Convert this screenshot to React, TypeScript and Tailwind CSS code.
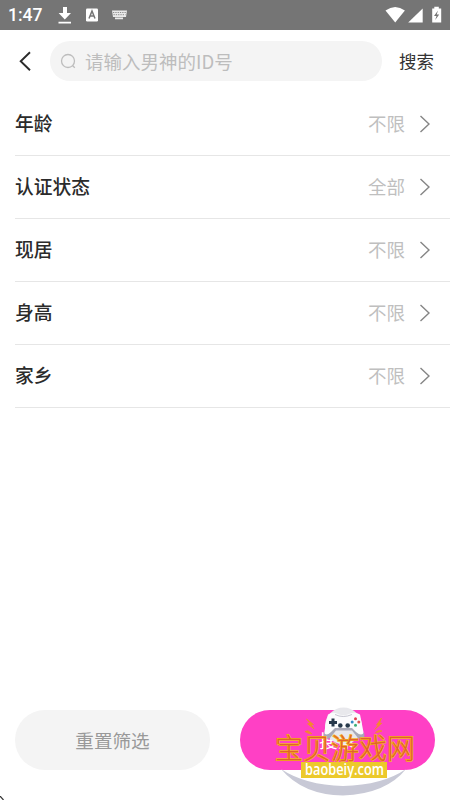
const filters = [
  { label: '年龄', value: '不限' },
  { label: '认证状态', value: '全部' },
  { label: '现居', value: '不限' },
  { label: '身高', value: '不限' },
  { label: '家乡', value: '不限' },
];

function StatusBar() {
  return (
    <div className="flex h-[30px] items-center bg-[#757575] pt-px pl-2 text-white">
      <span className="w-[49px] pt-px font-[Roboto] text-[17.500px] leading-none font-medium">1:47</span>
      <svg className="-mt-px h-[30px] w-[90px]" viewBox="57 0 90 30" fill="currentColor">
        <path d="M63 7h4v6h4l-6.200 6.500L58.600 13H63zM58.500 21.700h12.500v1.800H58.500z" />
        <rect x="86" y="8.500" width="12" height="13" rx="1.200" />
        <path d="M89 18.500l3-7.500 3 7.500M90 16h4" fill="none" stroke="#757575" strokeWidth="1.500" />
        <path d="M112 10.500h15l-1 6.500h-13zM115 17.500h8v1.800h-8z" opacity=".85" />
        <path d="M113 12.500h13M113.500 14.700h12" stroke="#757575" strokeWidth=".8" strokeDasharray="1.300 1" />
      </svg>
      <svg className="-mt-px ml-auto h-[30px] w-[70px]" viewBox="380 0 70 30" fill="currentColor">
        <path d="M385.500 10.500q9.700-7 19.400 0L395.200 22.500z" />
        <path d="M422.700 8.500v14h-14.500z" />
        <path d="M434.300 6.700h4.500v1.800h2.400v14h-9v-14h2.100z" />
        <path d="M438 10.500l-4 5.500h2.500l-1.300 4 4-5.400h-2.500z" fill="#757575" />
      </svg>
    </div>
  );
}

function Header() {
  return (
    <header className="flex h-[62px] items-center">
      <svg className="h-[22px] w-[50px]" viewBox="0 50 50 22" fill="none" stroke="#2b2b2b" strokeWidth="1.900">
        <path d="M30 52.300L20.700 61.300l9.300 9" />
      </svg>
      <div className="flex h-10 w-[332px] items-center rounded-full bg-[#f4f4f4] text-[#bdbdbd]">
        <svg className="ml-[10px] h-4 w-4" viewBox="0 0 16 16" fill="none" stroke="currentColor" strokeWidth="1.300">
          <circle cx="8" cy="8" r="6.500" />
          <path d="M12.500 12.500l2.300 2.300" />
        </svg>
        <span className="ml-[9px] text-[18.500px] leading-none">请输入男神的ID号</span>
      </div>
      <span className="ml-[17px] text-[17.500px] leading-none text-[#333]">搜索</span>
    </header>
  );
}

function FilterRow({ label, value }: { label: string; value: string }) {
  return (
    <div className="ml-[15px] flex h-[63px] items-center border-b border-[#e6e6e6] pr-[19px]">
      <span className="pb-[2px] text-[18.750px] leading-none font-medium text-[#2b2b2b]">{label}</span>
      <span className="ml-auto pb-[2px] text-[18.500px] leading-none text-[#bfbfbf]">{value}</span>
      <svg className="mr-px mb-px ml-[14px] h-[18px] w-[11px]" viewBox="0 0 11 18" fill="none" stroke="#858585" strokeWidth="1.400">
        <path d="M1.500 1L10 9l-8.500 8" />
      </svg>
    </div>
  );
}

// Site badge that floats over the confirm button
function Watermark() {
  return (
    <svg className="pointer-events-none absolute top-[700px] left-[270px] h-[100px] w-[150px]" viewBox="270 700 150 100">
      <path d="M281 769Q305 785 343 786Q383 785 406 769Q386 794 343 795.500Q303 795 281 769z" fill="#c8c9d6" />
      <circle cx="343.500" cy="726" r="18.500" fill="#e8e8ec" />
      <path
        d="M328 714.500Q333 711.500 338 714Q343.500 716.500 349 714Q355 711.500 360 714.500Q362 724 364 735Q362 740 356 734L352 729H335L331 734Q326 740 324 735Q325 724 328 714.500z"
        fill="#fbfbfd"
      />
      <path d="M324 732Q325.500 737 331 732L335 728H352L356 732Q362 737 364 732Q366 742 358 738L352 730.500H336L330 738Q323 742 324 732z" fill="#a9a9b8" />
      <path d="M335 714.500q8 4 17 0" fill="none" stroke="#c5c5cf" />
      <g fill="#26384b">
        <path d="M331.500 718.500h3v2.500h2.500v3h-2.500v2.500h-3V724H329v-3h2.500z" />
        <circle cx="340.300" cy="725.500" r="2.300" />
        <circle cx="347.700" cy="725.500" r="2.300" />
      </g>
      <circle cx="355.500" cy="718.700" r="1.500" fill="#df4050" />
      <circle cx="355.500" cy="725.300" r="1.500" fill="#3cae78" />
      <circle cx="352.200" cy="722" r="1.500" fill="#3589c4" />
      <circle cx="358.800" cy="722" r="1.500" fill="#df5050" />
      <path
        d="M306.500 719l7 5.500-2.500.3 3 4-6.500-5 2.500-.5zM305 731.500l3-.7 4 3-3.500-.5zM381.500 718l-5 7 2.200-.2-4 4.700 7-6.200-2.200-.2zM375.500 732.500l3-2 3.500.4-3 1.200z"
        fill="#f28c28"
        stroke="#f28c28"
        strokeWidth=".8"
      />
      <text
        x="275"
        y="758.500"
        fontSize="28"
        fill="#e2602c"
        stroke="#f5b21e"
        strokeWidth="1.500"
        paintOrder="stroke"
        textLength="140"
        className="font-['Noto_Sans_CJK_SC',sans-serif] font-light"
      >
        宝贝游戏网
      </text>
      <rect x="301" y="762" width="86" height="16" fill="#ecc92b" />
      <text x="305" y="774.500" fontSize="15.500" fill="#fff" textLength="79" lengthAdjust="spacingAndGlyphs" className="font-['Open_Sans',sans-serif] font-semibold">
        baobeiy.com
      </text>
    </svg>
  );
}

export default function App() {
  return (
    <div className="relative flex h-[800px] w-[450px] flex-col overflow-hidden bg-white font-['Noto_Sans_CJK_SC',sans-serif]">
      <StatusBar />
      <Header />
      <main className="mt-px">
        {filters.map((item) => (
          <FilterRow key={item.label} label={item.label} value={item.value} />
        ))}
      </main>
      <div className="mt-auto mb-[30px] flex gap-[30px] px-[15px] text-[18.600px]">
        <button className="h-[60px] flex-1 rounded-full bg-[#f4f4f4] text-[#999]">重置筛选</button>
        <button className="h-[60px] flex-1 rounded-full bg-[#ff40c5] text-white">搜索</button>
      </div>
      <Watermark />
      <svg className="absolute bottom-0 left-0 h-1 w-1" viewBox="0 0 4 4">
        <path d="M0 0l3.500 4" stroke="#333" strokeWidth="1.200" />
      </svg>
    </div>
  );
}
